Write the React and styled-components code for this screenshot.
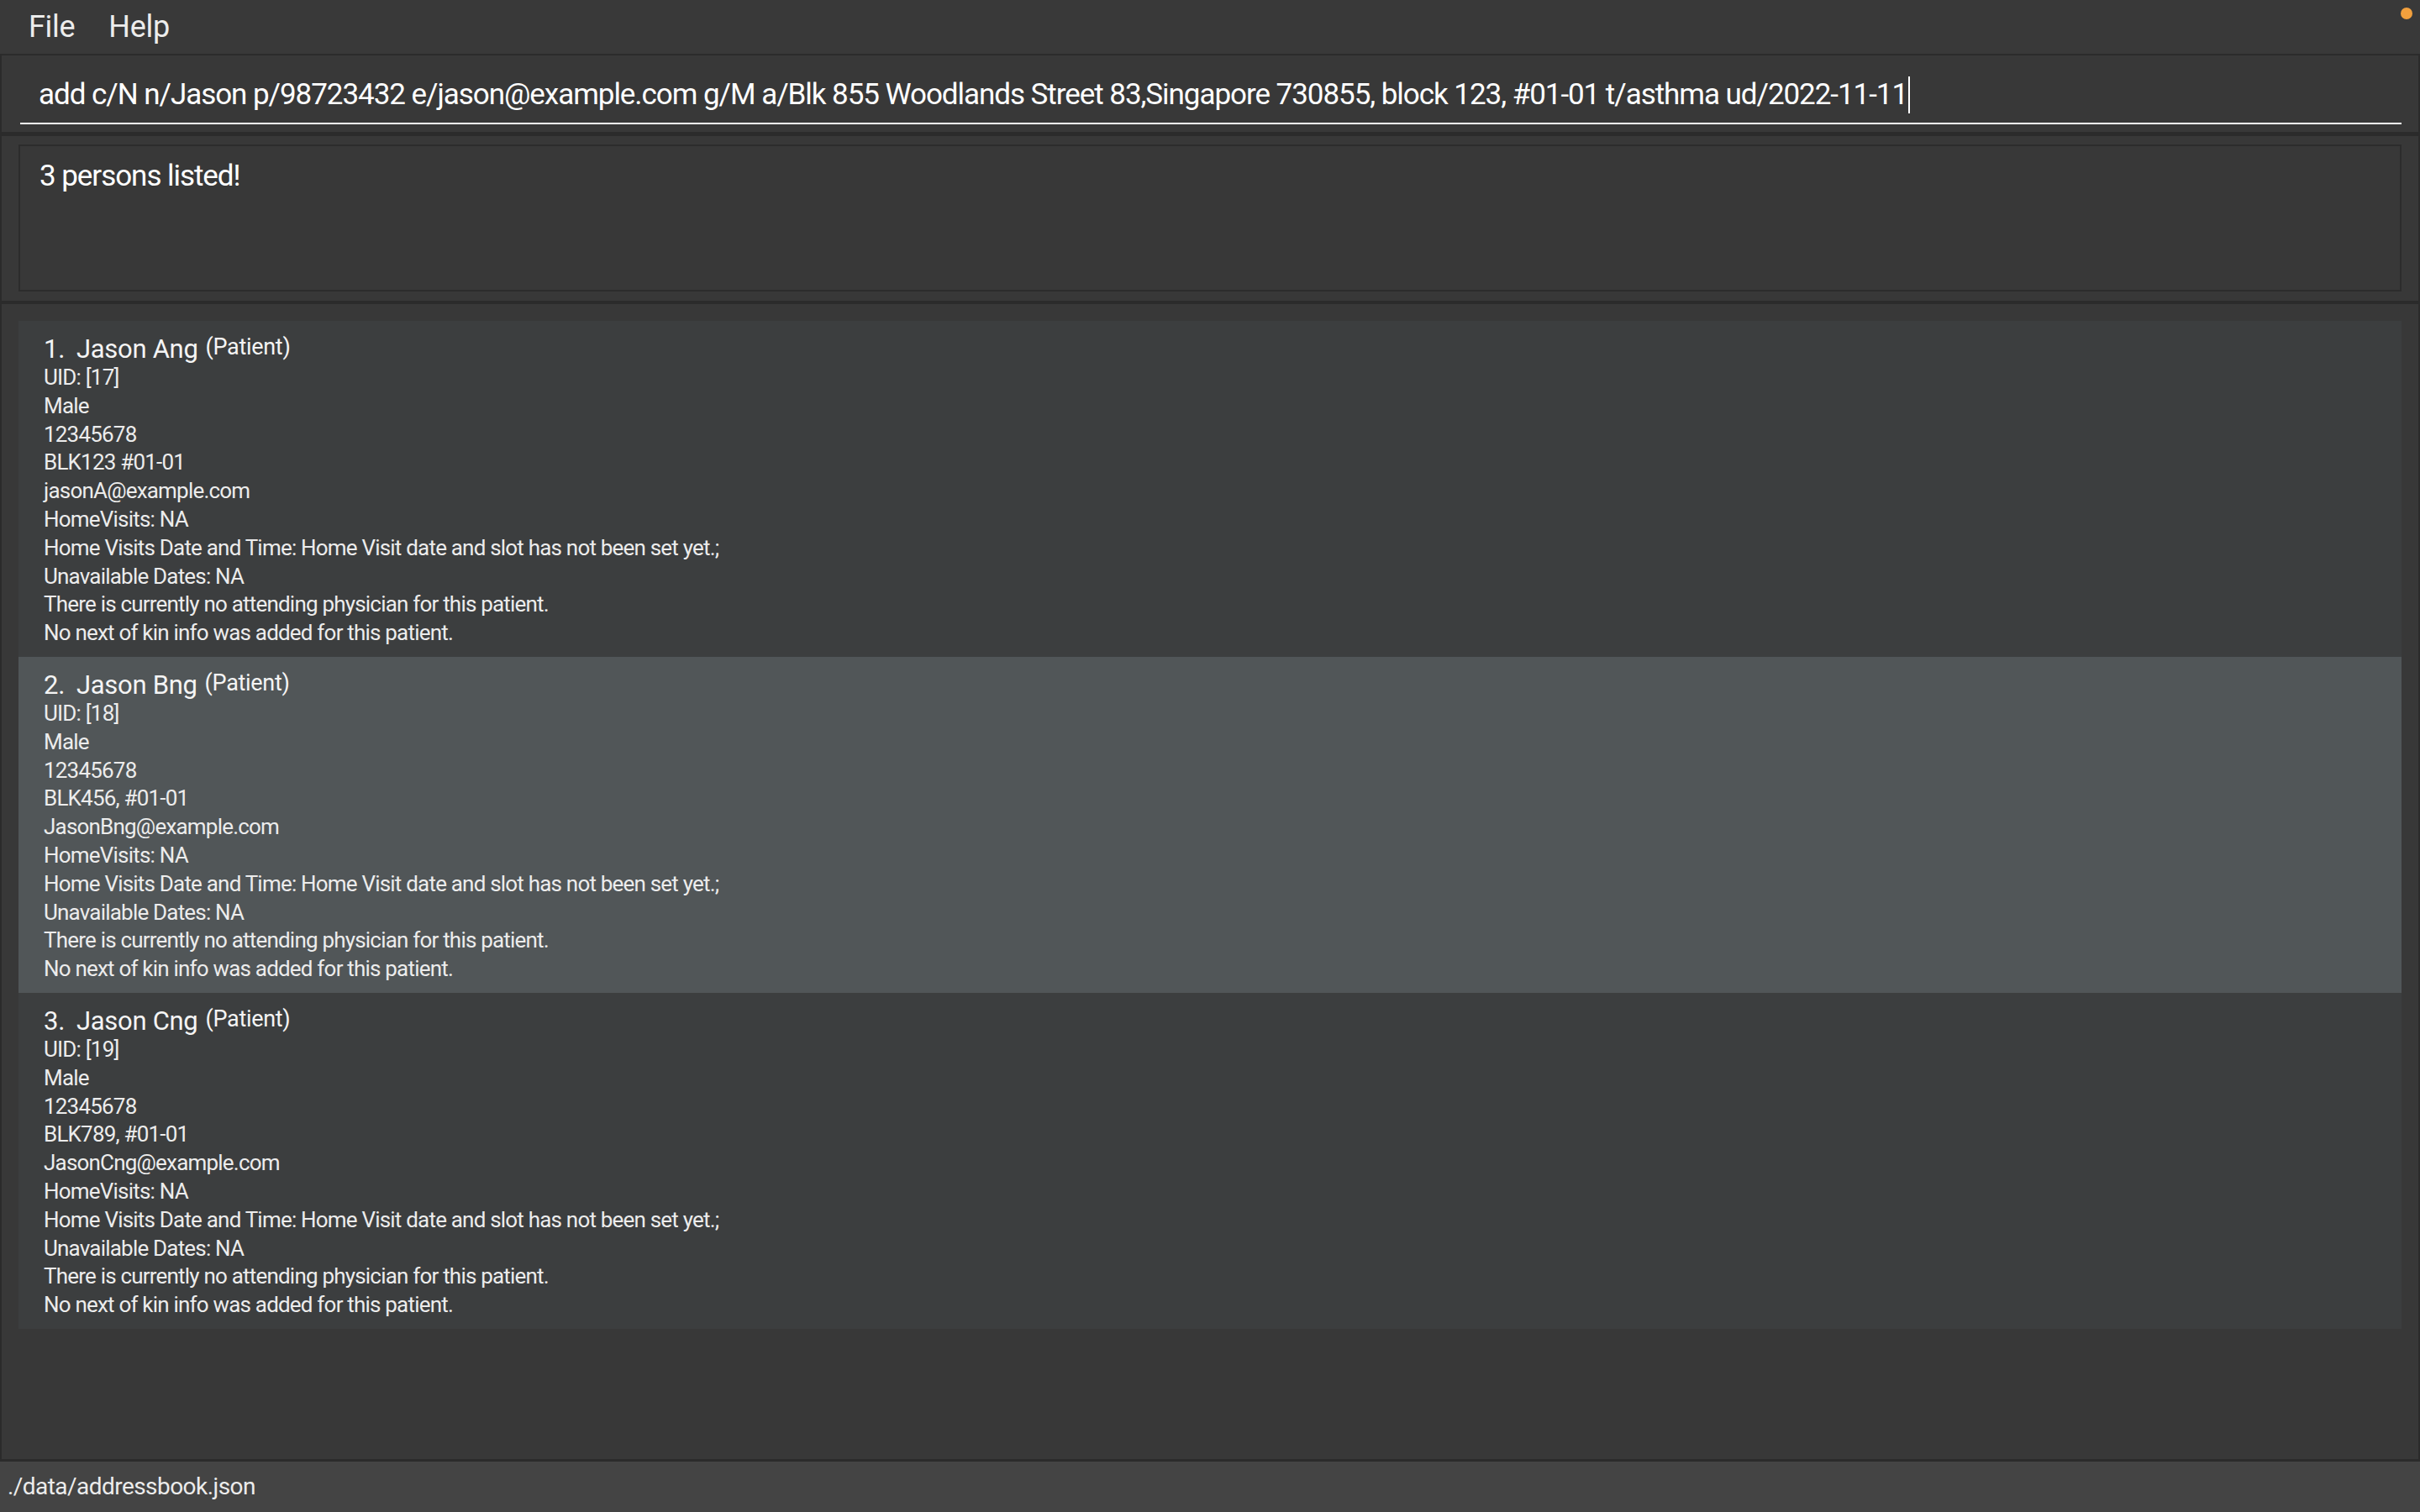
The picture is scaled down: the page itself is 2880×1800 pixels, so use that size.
import React from "react";
import styled, { createGlobalStyle } from "styled-components";

const GlobalStyle = createGlobalStyle`
  html, body {
    margin: 0;
    padding: 0;
    background: #2b2b2b;
  }
  body {
    font-family: Roboto, "Noto Sans", "Liberation Sans", sans-serif;
    color: #f2f2f2;
  }
  * { box-sizing: border-box; }
`;

const Window = styled.div`
  position: relative;
  width: 2880px;
  height: 1800px;
  display: flex;
  flex-direction: column;
  background: #2b2b2b;
  overflow: hidden;
`;

const MenuBar = styled.div`
  height: 64px;
  flex: none;
  display: flex;
  align-items: center;
  padding-left: 34px;
  gap: 40px;
  background: #393939;
  margin-bottom: 2px;
`;

const MenuItem = styled.span`
  font-size: 36px;
  line-height: 64px;
  color: #ececec;
  letter-spacing: -0.3px;
`;

const StatusDot = styled.span`
  position: absolute;
  top: 9px;
  right: 9px;
  width: 14px;
  height: 14px;
  border-radius: 50%;
  background: #f2a03d;
`;

const Pane = styled.div`
  flex: none;
  margin: 0 2px;
  background: #383838;
  height: ${(p) => p.$h}px;
  margin-bottom: ${(p) => p.$mb}px;
`;

const CommandPane = styled(Pane)`
  display: flex;
  align-items: flex-end;
  padding: 0 20px 9px 22px;
`;

const CommandField = styled.div`
  flex: 1;
  display: flex;
  align-items: center;
  padding: 0 0 11px 22px;
  border-bottom: 2px solid #ffffff;
  font-size: 35px;
  line-height: 44px;
  letter-spacing: -1.05px;
  color: #ffffff;
  white-space: nowrap;
`;

const Caret = styled.span`
  display: inline-block;
  width: 2px;
  height: 44px;
  margin-left: 1px;
  background: #ffffff;
`;

const ResultPane = styled(Pane)`
  padding: 10px 20px 11px 20px;
  display: flex;
`;

const ResultBox = styled.div`
  flex: 1;
  border: 2px solid #2c2c2c;
  padding: 14px 23px;
  font-size: 35px;
  line-height: 44px;
  letter-spacing: -1.05px;
  color: #ffffff;
`;

const ListPane = styled(Pane)`
  flex: 1;
  padding: 20px 20px 0 20px;
  display: flex;
  flex-direction: column;
`;

const Card = styled.div`
  height: 400px;
  flex: none;
  padding: 11px 0 0 30px;
  background: ${(p) => (p.$odd ? "#515658" : "#3c3e3f")};
`;

const TitleRow = styled.div`
  height: 40px;
  line-height: 40px;
  white-space: nowrap;
  color: #f4f4f4;
  letter-spacing: -0.3px;
`;

const Index = styled.span`
  font-size: 31px;
  margin-right: 14px;
`;

const Name = styled.span`
  font-size: 31px;
  margin-right: 9px;
`;

const Role = styled.span`
  font-size: 27px;
  vertical-align: 4px;
`;

const Line = styled.div`
  font-size: 26px;
  line-height: 33.8px;
  letter-spacing: -0.8px;
  color: #ececec;
  white-space: nowrap;
`;

const StatusBar = styled.div`
  height: 60px;
  flex: none;
  margin-top: 3px;
  background: #444444;
  padding-left: 9px;
  font-size: 28px;
  line-height: 60px;
  letter-spacing: -0.55px;
  color: #ececec;
`;

const persons = [
  { name: "Jason Ang", uid: 17, addr: "BLK123 #01-01", email: "jasonA@example.com" },
  { name: "Jason Bng", uid: 18, addr: "BLK456, #01-01", email: "JasonBng@example.com" },
  { name: "Jason Cng", uid: 19, addr: "BLK789, #01-01", email: "JasonCng@example.com" },
];

export default function App() {
  return (
    <>
      <GlobalStyle />
      <Window>
        <MenuBar>
          <MenuItem>File</MenuItem>
          <MenuItem>Help</MenuItem>
        </MenuBar>
        <StatusDot />
        <CommandPane $h={91} $mb={5}>
          <CommandField>
            add c/N n/Jason p/98723432 e/jason@example.com g/M a/Blk 855 Woodlands Street 83,Singapore 730855, block 123, #01-01 t/asthma ud/2022-11-11
            <Caret />
          </CommandField>
        </CommandPane>
        <ResultPane $h={196} $mb={4}>
          <ResultBox>3 persons listed!</ResultBox>
        </ResultPane>
        <ListPane $mb={0}>
          {persons.map((p, i) => (
            <Card key={p.uid} $odd={i % 2 === 1}>
              <TitleRow>
                <Index>{i + 1}.</Index>
                <Name>{p.name}</Name>
                <Role>(Patient)</Role>
              </TitleRow>
              <Line>UID: [{p.uid}]</Line>
              <Line>Male</Line>
              <Line>12345678</Line>
              <Line>{p.addr}</Line>
              <Line>{p.email}</Line>
              <Line>HomeVisits: NA</Line>
              <Line>Home Visits Date and Time: Home Visit date and slot has not been set yet.;</Line>
              <Line>Unavailable Dates: NA</Line>
              <Line>There is currently no attending physician for this patient.</Line>
              <Line>No next of kin info was added for this patient.</Line>
            </Card>
          ))}
        </ListPane>
        <StatusBar>./data/addressbook.json</StatusBar>
      </Window>
    </>
  );
}
